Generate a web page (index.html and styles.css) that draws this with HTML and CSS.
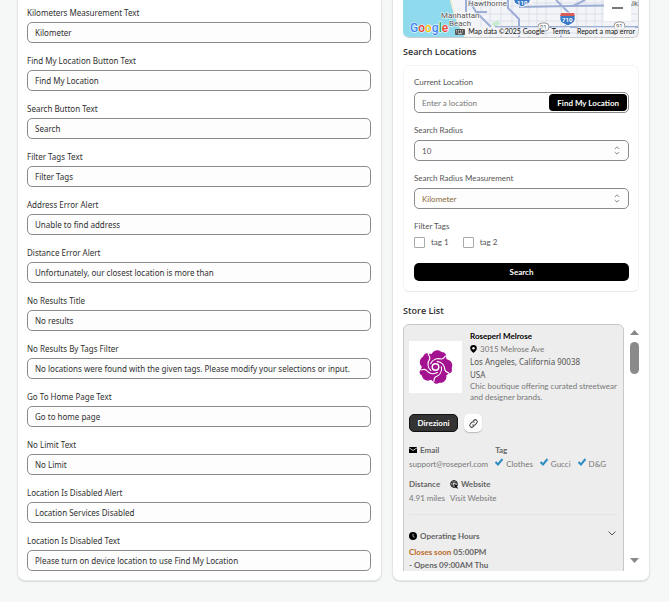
FILE: index.html
```html
<!DOCTYPE html>
<html lang="en">
<head>
<meta charset="utf-8">
<title>Store locator settings</title>
<link rel="stylesheet" href="styles.css">
</head>
<body>
<main class="page">
  <form class="panel settings">
    <div class="field"><label for="f1">Kilometers Measurement Text</label><input id="f1" type="text" value="Kilometer"></div>
    <div class="field"><label for="f2">Find My Location Button Text</label><input id="f2" type="text" value="Find My Location"></div>
    <div class="field"><label for="f3">Search Button Text</label><input id="f3" type="text" value="Search"></div>
    <div class="field"><label for="f4">Filter Tags Text</label><input id="f4" type="text" value="Filter Tags"></div>
    <div class="field"><label for="f5">Address Error Alert</label><input id="f5" type="text" value="Unable to find address"></div>
    <div class="field"><label for="f6">Distance Error Alert</label><input id="f6" type="text" value="Unfortunately, our closest location is more than"></div>
    <div class="field"><label for="f7">No Results Title</label><input id="f7" type="text" value="No results"></div>
    <div class="field"><label for="f8">No Results By Tags Filter</label><input id="f8" type="text" value="No locations were found with the given tags. Please modify your selections or input."></div>
    <div class="field"><label for="f9">Go To Home Page Text</label><input id="f9" type="text" value="Go to home page"></div>
    <div class="field"><label for="f10">No Limit Text</label><input id="f10" type="text" value="No Limit"></div>
    <div class="field"><label for="f11">Location Is Disabled Alert</label><input id="f11" type="text" value="Location Services Disabled"></div>
    <div class="field"><label for="f12">Location Is Disabled Text</label><input id="f12" type="text" value="Please turn on device location to use Find My Location"></div>
  </form>

  <section class="panel preview">
    <div class="map">
      <svg class="map-art" viewBox="0 0 236 38" preserveAspectRatio="xMinYMin slice" aria-hidden="true">
        <rect width="236" height="38" fill="#f3f4f8"/>
        <path d="M78 0V38M87 0V38M98 0V38M109 0V38M126 0V38M134 0V38M143 0V38M158 0V38M174 0V38M183 0V38M192 0V38M199 0V38M64 6H236M80 14H236M84 21H236M90 33H236M130 3H236" stroke="#dce0ea" fill="none"/>
        <path d="M0 0H48Q51 14 57 26L63 38H0Z" fill="#90daee"/>
        <path d="M48 0Q51 14 57 26L63 38" stroke="#f4eeda" stroke-width="2" fill="none"/>
        <path d="M88 24l7-4 2 4-5 3z" fill="#c5ebcf"/>
        <path d="M63 0V12M66 0L73 12L88 27M72 12H84M105 0V8L116 19V38M153 0L166 13V21L158 32V38M116 7L166 6L236 5M170 6L182 0M92 27H236" stroke="#9caed5" stroke-width="2" fill="none"/>
        <g class="shield"><path d="M112 -5h14q3 6-1 9l-6 3-6-3q-4-3-1-9z" fill="#3a7ac6" stroke="#fff"/><text x="114" y="5">110</text></g>
        <g class="shield"><path d="M158 13h13q3 7-1 10l-5 3-6-3q-4-3-1-10z" fill="#3a7ac6" stroke="#fff"/><path d="M158 13h13l1 3h-15z" fill="#d95c59"/><text x="159" y="22">710</text></g>
        <g class="route"><rect x="135" y="23" width="11" height="8" rx="4"/><text x="137" y="29">91</text><rect x="211" y="22" width="11" height="8" rx="4"/><text x="213" y="28">91</text></g>
        <g class="town"><text x="65" y="6">Hawthorne</text><text x="38" y="18">Manhattan</text><text x="46" y="26">Beach</text><text x="229" y="6">lk</text></g>
        <g class="brand"><text x="7" y="32"><tspan fill="#4285f4">G</tspan><tspan fill="#ea4335">o</tspan><tspan fill="#fbbc05">o</tspan><tspan fill="#4285f4">g</tspan><tspan fill="#34a853">l</tspan><tspan fill="#ea4335">e</tspan></text></g>
      </svg>
      <button class="zoom-out" type="button" aria-label="Zoom out"></button>
      <div class="map-legal">
        <svg width="10" height="6" viewBox="0 0 10 6" aria-hidden="true"><rect width="10" height="6" rx="1" fill="#555"/><path d="M1 1.5h8M1 3h8" stroke="#ddd" stroke-dasharray="1 1" stroke-width=".8"/><path d="M3 4.7h4" stroke="#fff" stroke-width=".8"/></svg>
        <span>Map data ©2025 Google</span><a href="#">Terms</a><a href="#">Report a map error</a>
      </div>
    </div>

    <h2>Search Locations</h2>
    <form class="search-card">
      <div class="field">
        <label for="loc">Current Location</label>
        <div class="location-box"><input id="loc" type="text" placeholder="Enter a location"><button type="button">Find My Location</button></div>
      </div>
      <div class="field">
        <label for="radius">Search Radius</label>
        <div class="select-box"><select id="radius"><option>10</option></select>
          <svg width="6" height="9" viewBox="0 0 6 9" aria-hidden="true"><path d="M.8 3L3 .8L5.200 3M.8 6L3 8.200L5.200 6"/></svg></div>
      </div>
      <div class="field">
        <label for="unit">Search Radius Measurement</label>
        <div class="select-box"><select id="unit" class="chosen"><option>Kilometer</option></select>
          <svg width="6" height="9" viewBox="0 0 6 9" aria-hidden="true"><path d="M.8 3L3 .8L5.200 3M.8 6L3 8.200L5.200 6"/></svg></div>
      </div>
      <fieldset>
        <legend>Filter Tags</legend>
        <div class="tags"><label><input type="checkbox">tag 1</label><label><input type="checkbox">tag 2</label></div>
      </fieldset>
      <button class="search-button" type="button">Search</button>
    </form>

    <h2>Store List</h2>
    <div class="store-list">
      <article class="store">
        <header class="store-head">
          <svg class="logo" width="53" height="52" viewBox="0 0 53 52" role="img" aria-label="Roseperl">
            <rect width="53" height="52" fill="#fff"/>
            <g transform="translate(26.500 26)" fill="#a3128f">
              <path id="petal" d="M-9-5C-12-10-9-14-4-13C-2-17 3-18 6-15C10-15 12-12 9-8L0 0Z"/>
              <use href="#petal" transform="rotate(72)"/><use href="#petal" transform="rotate(144)"/><use href="#petal" transform="rotate(216)"/><use href="#petal" transform="rotate(288)"/>
              <g fill="none" stroke="#fff" stroke-width="1.200"><path id="vein" d="M-5-3C-3-8 2-9 6-8C8-8 9-10 10-11"/><use href="#vein" transform="rotate(72)"/><use href="#vein" transform="rotate(144)"/><use href="#vein" transform="rotate(216)"/><use href="#vein" transform="rotate(288)"/></g>
              <circle r="3.300" fill="none" stroke="#fff" stroke-width="1.400"/>
            </g>
          </svg>
          <div class="store-info">
            <h3>Roseperl Melrose</h3>
            <p class="street"><svg width="7" height="8" viewBox="0 0 7 8" aria-hidden="true"><path d="M3.500 0A3.300 3.300 0 0 0 .2 3.300C.2 5.500 3.500 8 3.500 8S6.800 5.500 6.800 3.300A3.300 3.300 0 0 0 3.500 0Z"/><circle cx="3.500" cy="3.200" r="1.200" fill="#fff"/></svg>3015 Melrose Ave</p>
            <p class="city">Los Angeles, California 90038<br>USA</p>
            <p class="about">Chic boutique offering curated streetwear and designer brands.</p>
          </div>
        </header>
        <div class="actions">
          <button class="directions" type="button">Direzioni</button>
          <button class="link" type="button" aria-label="Copy link"><svg width="11" height="11" viewBox="0 0 11 11" aria-hidden="true"><g transform="rotate(-45 5.500 5.500)" fill="none" stroke="#444"><path d="M4.500 7.500H3a2 2 0 0 1 0-4h2a2 2 0 0 1 2 2"/><path d="M6.500 3.500H8a2 2 0 0 1 0 4H6a2 2 0 0 1-2-2"/></g></svg></button>
        </div>
        <div class="facts contact">
          <div><h4><svg width="8" height="6" viewBox="0 0 8 6" aria-hidden="true"><path d="M0 0H8V6H0Z"/><path d="M0 .8L4 3.500L8 .8" fill="none" stroke="#eee" stroke-width=".8"/></svg>Email</h4><p>support@roseperl.com</p></div>
          <div><h4>Tag</h4><ul>
            <li><svg width="8" height="8" viewBox="0 0 8 8" aria-hidden="true"><path d="M.5 4L3 6.500L7.500 1"/></svg>Clothes</li>
            <li><svg width="8" height="8" viewBox="0 0 8 8" aria-hidden="true"><path d="M.5 4L3 6.500L7.500 1"/></svg>Gucci</li>
            <li><svg width="8" height="8" viewBox="0 0 8 8" aria-hidden="true"><path d="M.5 4L3 6.500L7.500 1"/></svg>D&amp;G</li></ul></div>
        </div>
        <div class="facts">
          <div><h4>Distance</h4><p>4.91 miles</p></div>
          <div><h4><svg width="8" height="9" viewBox="0 0 8 9" aria-hidden="true"><circle cx="4" cy="4" r="3.400" fill="none" stroke="#222"/><path d="M4 .5C1.500 2 1.500 6 4 7.500M4 .5C6 2 6 3 6 4M1 2.700H7M1 5.200H4" fill="none" stroke="#222" stroke-width=".8"/><path d="M4 4l4 1.500-1.600.8L8 8l-.8.8L5.800 7 5 8.300Z"/></svg>Website</h4><p><a href="#">Visit Website</a></p></div>
        </div>
        <section class="hours">
          <h4><svg width="8" height="8" viewBox="0 0 8 8" aria-hidden="true"><circle cx="4" cy="4" r="4"/><path d="M4 1.800V4.300L5.500 5.300" fill="none" stroke="#ddd" stroke-width=".8"/></svg>Operating Hours<svg class="chevron" width="8" height="5" viewBox="0 0 8 5" aria-hidden="true"><path d="M.6 .6L4 4L7.400 .6"/></svg></h4>
          <p><em>Closes soon</em> 05:00PM<br>- Opens 09:00AM Thu</p>
        </section>
      </article>
      <div class="scrollbar" aria-hidden="true">
        <svg width="9" height="5" viewBox="0 0 9 5"><path d="M0 5L4.500 0L9 5Z"/></svg>
        <div class="thumb"></div>
        <svg width="9" height="5" viewBox="0 0 9 5"><path d="M0 0L4.500 5L9 0Z"/></svg>
      </div>
    </div>
  </section>
</main>
</body>
</html>
```
FILE: styles.css
```css
* { box-sizing: border-box; }
body { margin: 0; background: #f6f8f8; font: 8px/14px Lato, "Open Sans", sans-serif; color: #303030; }
h2, h3, h4, p, ul { margin: 0; padding: 0; }
input, select, button { font: inherit; color: inherit; margin: 0; }
a { color: inherit; text-decoration: none; }

.page { display: grid; grid-template-columns: 365fr 258fr; gap: 10px; padding: 0 19px 20px 17px; }
.panel { min-width: 0; background: #fff; border: 1px solid #e3e5e5; border-top: 0; border-radius: 0 0 8px 8px; box-shadow: 0 1px 1px #dcdede; }

.settings { display: grid; gap: 11px; padding: 6px 10px 9px 9px; font-family: "Noto Sans", sans-serif; }
.field { display: grid; gap: 2px; }
.field input, .field select { width: 100%; height: 21px; padding: 0 8px 0 7px; border: 1px solid #8a8a8a; border-radius: 5px; background: #fdfdfd; outline: 0; }

.preview { padding: 0 10px 9px; }
.map { position: relative; height: 38px; border: 1px solid #ccc; border-width: 0 1px 1px 0; border-radius: 0 0 6px 6px; overflow: hidden; }
.map-art { display: block; width: 100%; height: 38px; }
.town text { font: 8px Roboto, sans-serif; fill: #555; stroke: #fff; stroke-width: 1px; paint-order: stroke; }
.shield text { font: bold 6px Roboto, sans-serif; fill: #fff; }
.route rect { fill: #fff; stroke: #999; }
.route text { font: 6px Roboto, sans-serif; fill: #555; }
.brand text { font: 500 12px Roboto, sans-serif; stroke: #fff; stroke-width: 1px; paint-order: stroke; }
.zoom-out { position: absolute; right: 7px; top: -6px; width: 27px; height: 27px; border: 0; background: #fff; padding: 0; display: grid; place-items: center; }
.zoom-out::before { content: ""; width: 11px; height: 2px; background: #777; }
.map-legal { position: absolute; right: 0; bottom: 1px; display: flex; align-items: center; padding: 0 3px; font: 7px/9px Lato, sans-serif; color: #111; white-space: nowrap; }
.map-legal span { margin-left: 3px; }
.map-legal a { margin-left: 7px; }
.map-legal span, .map-legal a { background: #f5f5f5aa; }

h2 { font: 600 9px/14px "Open Sans", sans-serif; }
.map + h2 { margin: 7px 0 6px; }
.search-card { padding: 9px 9px 10px 10px; border: 1px solid #f4f4f4; border-bottom-color: #e8e8e8; border-radius: 6px; margin-bottom: 12px; color: #555; }
.search-card .field { gap: 3px; margin-bottom: 10px; }
.location-box, .select-box { position: relative; display: flex; }
.location-box button { position: absolute; right: 2px; top: 2px; height: 17px; padding: 0 8px; border: 0; border-radius: 4px; background: #000; color: #fff; font-weight: 700; }
.select-box select { appearance: none; }
.select-box .chosen { color: #8a6a3a; }
.select-box svg { position: absolute; right: 9px; top: 6px; fill: none; stroke: #8a8a8a; pointer-events: none; }
::placeholder { color: #777; opacity: 1; }
fieldset { border: 0; margin: 0; padding: 0; min-width: 0; }
legend { padding: 0; }
.tags { display: flex; gap: 14px; padding: 4px 0 15px; line-height: 11px; }
.tags label { display: flex; align-items: center; gap: 6px; }
.tags input { appearance: none; width: 11px; height: 11px; border: 1px solid #aaa; border-radius: 1px; background: #fff; }
.search-button { display: block; width: 100%; height: 18px; padding: 0; border: 0; border-radius: 5px; background: #000; color: #fff; font-weight: 700; }

.store-list { display: flex; gap: 6px; height: 247px; overflow: hidden; margin-top: 6px; }
.store { flex: 1; min-width: 0; align-self: flex-start; padding: 5px; border: 1px solid #c8c8c8; border-radius: 6px 6px 0 0; background: #ededed; color: #777; line-height: 11px; }
.store-head { display: flex; gap: 8px; }
.logo { flex: none; margin-top: 11px; }
h3 { font-size: 8px; line-height: 13px; color: #000; }
.street { display: flex; align-items: center; gap: 3px; line-height: 12px; }
.street svg { fill: #000; }
.city { font-family: "Noto Sans", sans-serif; line-height: 13px; color: #555; }
.actions { display: flex; gap: 6px; margin: 11px 0; }
.actions button { height: 18px; border-radius: 5px; padding: 0; display: grid; place-items: center; }
.directions { width: 49px; border: 1px solid #111; background: #333; color: #fff; font-weight: 700; }
.link { width: 18px; border: 0; background: #fff; box-shadow: 0 1px 1px #bbb; }
h4 { display: flex; align-items: center; gap: 3px; font-size: 8px; line-height: 14px; font-weight: 700; color: #666; }
.facts { display: flex; gap: 5px; margin-bottom: 6px; line-height: 14px; }
.contact { gap: 7px; }
.facts ul { display: flex; gap: 7px; list-style: none; }
.facts li { display: flex; align-items: center; gap: 3px; }
.facts li svg { margin-bottom: 4px; fill: none; stroke: #2d8cc0; stroke-width: 2px; }
.hours { margin-top: 9px; border-top: 1px solid #e4e4e4; padding: 13px 0 8px; line-height: 13px; font-weight: 700; color: #666; }
.hours h4 { line-height: 16px; margin-bottom: 2px; }
.hours em { font-style: normal; color: #b9691f; }
.chevron { margin: 0 2px 5px auto; fill: none; stroke: #555; }
.scrollbar { flex: none; width: 9px; display: flex; flex-direction: column; gap: 7px; padding: 6px 0 8px; fill: #888; }
.thumb { height: 32px; margin-bottom: auto; border-radius: 5px; background: #8a8a8a; }
```
